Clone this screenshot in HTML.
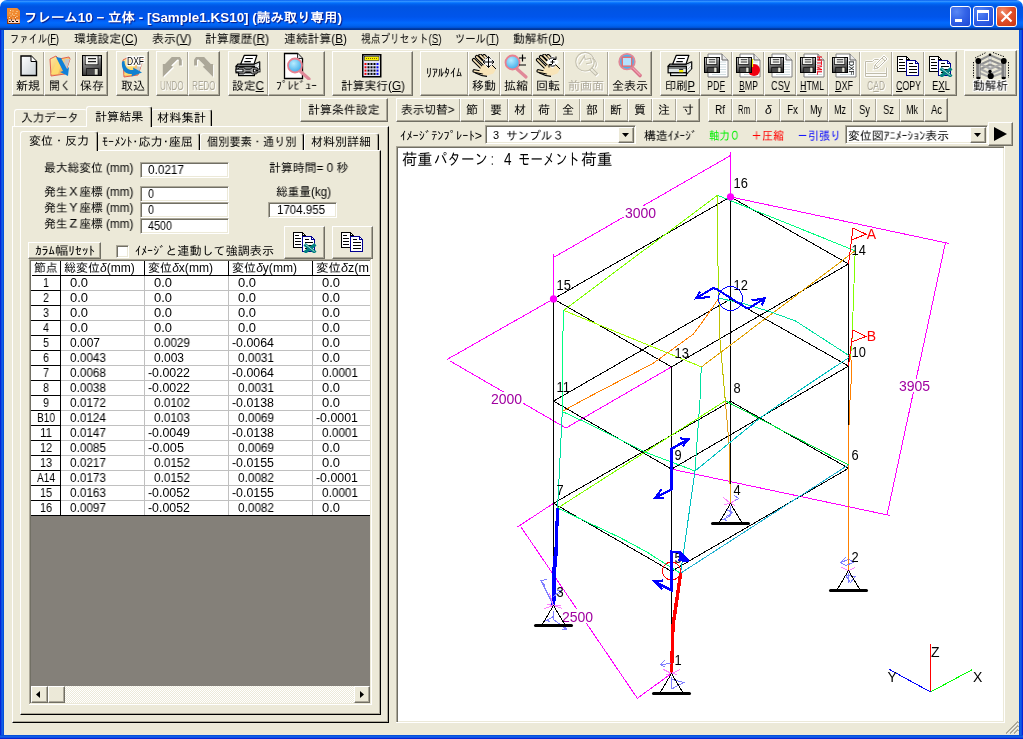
<!DOCTYPE html>
<html lang="ja"><head><meta charset="utf-8"><title>フレーム10 − 立体</title><style>
html,body{margin:0;padding:0}
body{width:1023px;height:739px;overflow:hidden;background:#ece9d8;position:relative;font-family:'Liberation Sans','IPAGothic',sans-serif;font-size:12px;color:#000}
div,span.t,svg{position:absolute}
svg{will-change:transform}
span.t{white-space:nowrap;transform-origin:0 50%;will-change:transform}
.rb{background:#ece9d8;box-sizing:border-box;border:1px solid;border-color:#fff #716f64 #716f64 #fff;box-shadow:inset -1px -1px 0 #aca899}
.sk{background:#fff;box-sizing:border-box;border:1px solid;border-color:#aca899 #fff #fff #aca899;box-shadow:inset 1px 1px 0 #716f64,inset -1px -1px 0 #ece9d8}
u{text-decoration:underline;text-underline-offset:1px}
</style></head><body>
<div style="left:0px;top:0px;width:8px;height:8px;background:#fff"></div>
<div style="left:1015px;top:0px;width:8px;height:8px;background:#fff"></div>
<div style="left:0px;top:0px;width:1023px;height:30px;background:linear-gradient(to bottom,#0058ee 0%,#3593ff 4%,#288eff 6%,#127dff 8%,#036ffc 10%,#0262ee 14%,#0057e5 20%,#0054e3 24%,#0055eb 56%,#005bf5 66%,#026afe 76%,#0062ef 86%,#0052d6 92%,#0040ab 94%,#003092 100%);border-radius:7px 7px 0 0"></div>
<div style="left:0px;top:30px;width:4px;height:709px;background:linear-gradient(to right,#0019cf 0,#0831d9 25%,#166aee 50%,#0855dd 75%,#0048d8 100%)"></div>
<div style="left:1019px;top:30px;width:4px;height:709px;background:linear-gradient(to right,#0048d8 0,#0855dd 25%,#166aee 50%,#0831d9 75%,#0019cf 100%)"></div>
<div style="left:0px;top:735px;width:1023px;height:4px;background:linear-gradient(to bottom,#0048d8 0,#0855dd 25%,#166aee 50%,#0831d9 75%,#0019cf 100%)"></div>
<svg style="left:7px;top:8px" width="13" height="16" viewBox="0 0 13 16"><path d="M0 0h10l3 3v13H0z" fill="#e87a22"/><path d="M0 0h10l3 3v5H0z" fill="#f08a30"/><path d="M3 2.500h1M5.500 3h1M9.500 3.500h1M2.500 5h1M5 6h1M8.500 5.500h1M3.500 8h1M6.500 7.500h1M9.500 8.500h1M2 9.500h1M5.500 10h1M8 9.500h1" stroke="#ffe6c0" stroke-width="1"/><rect x="1.500" y="11.500" width="11" height="3.500" fill="#ffd8c4"/><path d="M2 13.500h1.500M5 13.500h2M9 13.500h2M4 12h1M8 12h1" stroke="#000" stroke-width="1"/><path d="M0 15.500h13M0.500 11v5" stroke="#8a3a10" stroke-width="1"/></svg>
<span class="t" style="left:24.00px;top:10.50px;font-size:13px;line-height:13px;font-weight:bold;color:#fff;text-shadow:1px 1px 1px #0a1883;transform:scaleX(1.0346);">フレーム10 − 立体 - [Sample1.KS10] (読み取り専用)</span>
<div style="left:950px;top:6px;width:21px;height:21px;box-sizing:border-box;border:1px solid #fff;border-radius:3px;background:radial-gradient(circle at 30% 25%,#5a88f4 0,#3464e8 45%,#1c48d4 100%)"><div style="left:4px;top:12px;width:7px;height:3px;background:#fff"></div></div>
<div style="left:973px;top:6px;width:21px;height:21px;box-sizing:border-box;border:1px solid #fff;border-radius:3px;background:radial-gradient(circle at 30% 25%,#5a88f4 0,#3464e8 45%,#1c48d4 100%)"><div style="left:3px;top:3px;width:12px;height:11px;box-sizing:border-box;border:1px solid #fff;border-top:3px solid #fff"></div></div>
<div style="left:996px;top:6px;width:21px;height:21px;box-sizing:border-box;border:1px solid #fff;border-radius:3px;background:radial-gradient(circle at 30% 25%,#f09070 0,#e2502a 45%,#c83412 100%)"><svg style="left:3px;top:3px" width="13" height="13" viewBox="0 0 13 13"><path d="M1.5 1.5L11.5 11.5M11.5 1.5L1.5 11.5" stroke="#fff" stroke-width="2.2"/></svg></div>
<span class="t" style="left:10.00px;top:33.00px;font-size:12px;line-height:12px;transform:scaleX(0.7736);">ファイル(<u>F</u>)</span>
<span class="t" style="left:74.00px;top:33.00px;font-size:12px;line-height:12px;transform:scaleX(0.9819);">環境設定(<u>C</u>)</span>
<span class="t" style="left:151.50px;top:33.00px;font-size:12px;line-height:12px;transform:scaleX(0.9871);">表示(<u>V</u>)</span>
<span class="t" style="left:205.00px;top:33.00px;font-size:12px;line-height:12px;transform:scaleX(0.9896);">計算履歴(<u>R</u>)</span>
<span class="t" style="left:283.50px;top:33.00px;font-size:12px;line-height:12px;transform:scaleX(0.9841);">連続計算(<u>B</u>)</span>
<span class="t" style="left:361.00px;top:33.00px;font-size:12px;line-height:12px;transform:scaleX(0.8049);">視点プリセット(<u>S</u>)</span>
<span class="t" style="left:455.00px;top:33.00px;font-size:12px;line-height:12px;transform:scaleX(0.8570);">ツール(<u>T</u>)</span>
<span class="t" style="left:513.00px;top:33.00px;font-size:12px;line-height:12px;transform:scaleX(0.9778);">動解析(<u>D</u>)</span>
<div style="left:4px;top:49px;width:1015px;height:1px;background:#fff"></div>
<div class="rb" style="left:12px;top:51px;width:33px;height:45px;"></div>
<span class="t" style="left:16.00px;top:79.50px;font-size:12px;line-height:12px;color:#000;">新規</span>
<div class="rb" style="left:44px;top:51px;width:33px;height:45px;"></div>
<span class="t" style="left:49.00px;top:79.50px;font-size:12px;line-height:12px;color:#000;transform:scaleX(0.9167);">開く</span>
<div class="rb" style="left:76px;top:51px;width:32px;height:45px;"></div>
<span class="t" style="left:80.00px;top:79.50px;font-size:12px;line-height:12px;color:#000;">保存</span>
<div class="rb" style="left:116px;top:51px;width:33px;height:45px;"></div>
<span class="t" style="left:120.50px;top:79.50px;font-size:12px;line-height:12px;color:#000;">取込</span>
<div class="rb" style="left:156px;top:51px;width:33px;height:45px;"></div>
<span class="t" style="left:161.25px;top:80.50px;font-size:12px;line-height:12px;color:#fff;transform:scaleX(0.6649);">UNDO</span>
<span class="t" style="left:160.25px;top:79.50px;font-size:12px;line-height:12px;color:#aca899;transform:scaleX(0.6649);">UNDO</span>
<div class="rb" style="left:188px;top:51px;width:32px;height:45px;"></div>
<span class="t" style="left:193.25px;top:80.50px;font-size:12px;line-height:12px;color:#fff;transform:scaleX(0.6778);">REDO</span>
<span class="t" style="left:192.25px;top:79.50px;font-size:12px;line-height:12px;color:#aca899;transform:scaleX(0.6778);">REDO</span>
<div class="rb" style="left:228px;top:51px;width:41px;height:45px;"></div>
<span class="t" style="left:232.00px;top:79.50px;font-size:12px;line-height:12px;color:#000;transform:scaleX(0.9794);">設定<u>C</u></span>
<div class="rb" style="left:268px;top:51px;width:57px;height:45px;"></div>
<span class="t" style="left:276.00px;top:79.50px;font-size:12px;line-height:12px;color:#000;transform:scaleX(0.9762);">ﾌﾟﾚﾋﾞｭｰ</span>
<div class="rb" style="left:332px;top:51px;width:81px;height:45px;"></div>
<span class="t" style="left:340.50px;top:79.50px;font-size:12px;line-height:12px;color:#000;transform:scaleX(0.9794);">計算実行(<u>G</u>)</span>
<div class="rb" style="left:420px;top:51px;width:49px;height:45px;"></div>
<span class="t" style="left:426.00px;top:66.70px;font-size:12px;line-height:12px;color:#000;">ﾘｱﾙﾀｲﾑ</span>
<div class="rb" style="left:468px;top:51px;width:33px;height:45px;"></div>
<span class="t" style="left:472.00px;top:79.50px;font-size:12px;line-height:12px;color:#000;">移動</span>
<div class="rb" style="left:500px;top:51px;width:33px;height:45px;"></div>
<span class="t" style="left:504.00px;top:79.50px;font-size:12px;line-height:12px;color:#000;">拡縮</span>
<div class="rb" style="left:532px;top:51px;width:33px;height:45px;"></div>
<span class="t" style="left:536.00px;top:79.50px;font-size:12px;line-height:12px;color:#000;">回転</span>
<div class="rb" style="left:564px;top:51px;width:45px;height:45px;"></div>
<span class="t" style="left:569.00px;top:80.50px;font-size:12px;line-height:12px;color:#fff;">前画面</span>
<span class="t" style="left:568.00px;top:79.50px;font-size:12px;line-height:12px;color:#aca899;">前画面</span>
<div class="rb" style="left:608px;top:51px;width:44px;height:45px;"></div>
<span class="t" style="left:612.00px;top:79.50px;font-size:12px;line-height:12px;color:#000;">全表示</span>
<div class="rb" style="left:660px;top:51px;width:41px;height:45px;"></div>
<span class="t" style="left:665.00px;top:79.50px;font-size:12px;line-height:12px;color:#000;transform:scaleX(0.9370);">印刷<u>P</u></span>
<div class="rb" style="left:700px;top:51px;width:33px;height:45px;"></div>
<span class="t" style="left:707.00px;top:79.50px;font-size:12px;line-height:12px;color:#000;transform:scaleX(0.7495);">PD<u>F</u></span>
<div class="rb" style="left:732px;top:51px;width:33px;height:45px;"></div>
<span class="t" style="left:738.50px;top:79.50px;font-size:12px;line-height:12px;color:#000;transform:scaleX(0.7303);"><u>B</u>MP</span>
<div class="rb" style="left:764px;top:51px;width:33px;height:45px;"></div>
<span class="t" style="left:770.50px;top:79.50px;font-size:12px;line-height:12px;color:#000;transform:scaleX(0.7696);">CS<u>V</u></span>
<div class="rb" style="left:796px;top:51px;width:33px;height:45px;"></div>
<span class="t" style="left:800.00px;top:79.50px;font-size:12px;line-height:12px;color:#000;transform:scaleX(0.7346);"><u>H</u>TML</span>
<div class="rb" style="left:828px;top:51px;width:33px;height:45px;"></div>
<span class="t" style="left:835.00px;top:79.50px;font-size:12px;line-height:12px;color:#000;transform:scaleX(0.7495);"><u>D</u>XF</span>
<div class="rb" style="left:860px;top:51px;width:33px;height:45px;"></div>
<span class="t" style="left:868.00px;top:80.50px;font-size:12px;line-height:12px;color:#fff;transform:scaleX(0.7098);">C<u>A</u>D</span>
<span class="t" style="left:867.00px;top:79.50px;font-size:12px;line-height:12px;color:#aca899;transform:scaleX(0.7098);">C<u>A</u>D</span>
<div class="rb" style="left:892px;top:51px;width:33px;height:45px;"></div>
<span class="t" style="left:895.50px;top:79.50px;font-size:12px;line-height:12px;color:#000;transform:scaleX(0.7350);"><u>C</u>OPY</span>
<div class="rb" style="left:924px;top:51px;width:33px;height:45px;"></div>
<span class="t" style="left:931.50px;top:79.50px;font-size:12px;line-height:12px;color:#000;transform:scaleX(0.7923);">E<u>X</u>L</span>
<div class="rb" style="left:964px;top:50px;width:53px;height:46px;"></div>
<span class="t" style="left:972.00px;top:79.50px;font-size:12px;line-height:12px;color:#fff;transform:scaleX(0.9722);">動解析</span>
<span class="t" style="left:974.00px;top:79.50px;font-size:12px;line-height:12px;color:#fff;transform:scaleX(0.9722);">動解析</span>
<span class="t" style="left:973.00px;top:78.50px;font-size:12px;line-height:12px;color:#fff;transform:scaleX(0.9722);">動解析</span>
<span class="t" style="left:973.00px;top:80.50px;font-size:12px;line-height:12px;color:#fff;transform:scaleX(0.9722);">動解析</span>
<span class="t" style="left:972.00px;top:78.50px;font-size:12px;line-height:12px;color:#fff;transform:scaleX(0.9722);">動解析</span>
<span class="t" style="left:974.00px;top:80.50px;font-size:12px;line-height:12px;color:#fff;transform:scaleX(0.9722);">動解析</span>
<span class="t" style="left:972.00px;top:80.50px;font-size:12px;line-height:12px;color:#fff;transform:scaleX(0.9722);">動解析</span>
<span class="t" style="left:974.00px;top:78.50px;font-size:12px;line-height:12px;color:#fff;transform:scaleX(0.9722);">動解析</span>
<span class="t" style="left:973.00px;top:79.50px;font-size:12px;line-height:12px;transform:scaleX(0.9722);">動解析</span>
<svg style="left:0px;top:0px" width="1" height="1" viewBox="0 0 1 1" ><defs><linearGradient id="gpg" x1="0" y1="0" x2="1" y2="1"><stop offset="0" stop-color="#fff"/><stop offset="1" stop-color="#c8d0d4"/></linearGradient><linearGradient id="gfl" x1="0" y1="0" x2="0.3" y2="1"><stop offset="0" stop-color="#d0d0d0"/><stop offset="0.5" stop-color="#808080"/><stop offset="1" stop-color="#303030"/></linearGradient><radialGradient id="glens" cx="0.4" cy="0.35" r="0.7"><stop offset="0" stop-color="#b8ecff"/><stop offset="1" stop-color="#38a8e8"/></radialGradient><linearGradient id="gfo" x1="0" y1="0" x2="1" y2="1"><stop offset="0" stop-color="#fff0a0"/><stop offset="1" stop-color="#f0a040"/></linearGradient></defs></svg>
<svg style="left:20px;top:55px" width="18" height="22" viewBox="0 0 18 22" ><path d="M1 1h10l5.5 5.5V20.5H1z" fill="url(#gpg)" stroke="#000" stroke-width="1.4"/><path d="M11 1v5.5h5.5" fill="#fff" stroke="#000" stroke-width="1"/></svg>
<svg style="left:48px;top:55px" width="24" height="22" viewBox="0 0 24 22" ><path d="M2 4l6-3 3 3 10-2 1 2-5 15-14 2z" fill="url(#gfo)" stroke="#e06050" stroke-width="1"/><path d="M3 19L9 6l5 1-4 12z" fill="#ffe070" opacity=".8"/><path d="M17 4l5 0-4 12-3-1z" fill="#c8c8c8"/></svg>
<svg style="left:48px;top:55px" width="24" height="22" viewBox="0 0 24 22" ><path d="M8 2l5 1 6 11 2-2-1 9-8-4 3-1z" fill="#1080d8"/></svg>
<svg style="left:82px;top:55px" width="20" height="21" viewBox="0 0 20 21" ><rect x="0.50" y="0.50" width="19.00" height="20.00" fill="url(#gfl)" stroke="#000" stroke-width="1.2"/><rect x="3.20" y="0.80" width="12.80" height="9.00" fill="#f4f4f0" stroke="#000" stroke-width=".7"/><path d="M6.0 3.6H14.0M6.0 6.6H14.0" stroke="#202020" stroke-width="1.20"/><rect x="17.20" y="1.60" width="1.40" height="1.60" fill="#d8d8d8" /><rect x="4.70" y="13.50" width="11.50" height="6.70" fill="#484848" stroke="#000" stroke-width=".6"/><rect x="12.80" y="14.00" width="2.80" height="5.60" fill="#e4e4d8" /></svg>
<svg style="left:121px;top:56px" width="24" height="22" viewBox="0 0 24 22" ><path d="M2 4l6-3 3 3 10-2 1 2-5 15-14 2z" fill="url(#gfo)" stroke="#e06050" stroke-width="1"/><path d="M3 19L9 6l5 1-4 12z" fill="#ffe070" opacity=".8"/><path d="M17 4l5 0-4 12-3-1z" fill="#c8c8c8"/></svg>
<svg style="left:120px;top:55px" width="26" height="24" viewBox="0 0 26 24" ><path d="M4.500 6C4.500 12 8 15.500 13.500 15L13 12.500L22 17.500L11.500 21.500L12 19C5 20 1 14 2 6.500z" fill="#1080d0"/><text x="7" y="9.5" font-size="10" font-family="Liberation Sans, sans-serif" stroke="#fff" stroke-width="2.5" textLength="17" lengthAdjust="spacingAndGlyphs">DXF</text><text x="7" y="9.5" font-size="10" font-family="Liberation Sans, sans-serif" fill="#000" textLength="17" lengthAdjust="spacingAndGlyphs">DXF</text></svg>
<svg style="left:156px;top:51px" width="64" height="32" viewBox="156 51 64 32"><path d="M163.8 64.9L166.0 64.9L172.8 58.1L180.9 58.1L182.8 60.7L182.8 66.5L179.9 66.5L179.9 60.7L178.3 60.4L172.2 66.5L174.1 67.8L163.8 78.1z" fill="#fff"/><path d="M162.8 63.9L165.0 63.9L171.8 57.1L179.9 57.1L181.8 59.7L181.8 65.5L178.9 65.5L178.9 59.7L177.3 59.4L171.2 65.5L173.1 66.8L162.8 77.1z" fill="#aca899"/><path d="M214.1 64.9L211.9 64.9L205.1 58.1L197.0 58.1L195.1 60.7L195.1 66.5L198.0 66.5L198.0 60.7L199.6 60.4L205.7 66.5L203.8 67.8L214.1 78.1z" fill="#fff"/><path d="M213.1 63.9L210.9 63.9L204.1 57.1L196.0 57.1L194.1 59.7L194.1 65.5L197.0 65.5L197.0 59.7L198.6 59.4L204.7 65.5L202.8 66.8L213.1 77.1z" fill="#aca899"/></svg>
<svg style="left:235px;top:54px" width="26" height="23" viewBox="0 0 26 23" ><path d="M1.100 12.300L2.800 10.200H19L24.700 7.800V14.700L19.400 20.400V12.300z" fill="#f4f6f6" stroke="#000" stroke-width="1.200" stroke-linejoin="round"/><path d="M20.500 12l3.500-3.500M20.500 15.500l3.500-3.500M20.500 19l3.500-4" stroke="#a0a8a8" stroke-width=".800"/><path d="M9.300 1.300H21.900L19 10.200H5.600z" fill="#fff" stroke="#000" stroke-width="1.200" stroke-linejoin="round"/><path d="M10.500 4.500h7.300M9.300 7.600h6.500" stroke="#000" stroke-width="1.200"/><rect x="1.100" y="12.300" width="18.300" height="6.500" fill="#dfe5e5" stroke="#000" stroke-width="1.200"/><path d="M1.100 14h18.300" stroke="#000" stroke-width=".900"/><rect x="3.600" y="18.800" width="15.800" height="2.800" fill="#eef2f2" stroke="#000" stroke-width="1.200"/><path d="M1.500 16.500L4.500 13.300H8.500L10.800 15.300H15.200L17.500 13.300H21.500L24.500 16.500L21.500 19.900H17.500L15.200 17.900H10.800L8.500 19.900H4.500z" fill="#9a9a9a" stroke="#000" stroke-width=".900"/><rect x="1" y="15.200" width="7" height="2.700" fill="#eef2f2" stroke="#000" stroke-width=".900"/><rect x="18.500" y="15.200" width="6.500" height="2.700" fill="#fff" stroke="#000" stroke-width=".900"/><rect x="20.500" y="16" width="3" height="1.200" fill="#000"/></svg>
<svg style="left:667px;top:54px" width="26" height="23" viewBox="0 0 26 23" ><path d="M1.100 12.300L2.800 10.200H19L24.700 7.800V14.700L19.400 20.400V12.300z" fill="#f4f6f6" stroke="#000" stroke-width="1.200" stroke-linejoin="round"/><path d="M20.500 12l3.500-3.500M20.500 15.500l3.500-3.500M20.500 19l3.500-4" stroke="#a0a8a8" stroke-width=".800"/><path d="M9.300 1.300H21.900L19 10.200H5.600z" fill="#fff" stroke="#000" stroke-width="1.200" stroke-linejoin="round"/><path d="M10.500 4.500h7.300M9.300 7.600h6.500" stroke="#000" stroke-width="1.200"/><rect x="1.100" y="12.300" width="18.300" height="6.500" fill="#dfe5e5" stroke="#000" stroke-width="1.200"/><path d="M1.100 14h18.300" stroke="#000" stroke-width=".900"/><rect x="3.600" y="18.800" width="15.800" height="2.800" fill="#eef2f2" stroke="#000" stroke-width="1.200"/><rect x="12.100" y="15.200" width="4.100" height="1" fill="#000"/><rect x="12.100" y="16" width="4.100" height="2.200" fill="#f8f000"/></svg>
<svg style="left:283px;top:52px" width="30" height="28" viewBox="0 0 30 28" ><path d="M1.5 1.5h13l5 5V26.500H1.500z" fill="#fff" stroke="#000" stroke-width="1.3"/><path d="M14.500 1.500v5h5" fill="#e0e0e0" stroke="#000" stroke-width=".8"/><path d="M17 19l9 8" stroke="#e08898" stroke-width="3.2" stroke-linecap="round"/><circle cx="12" cy="13.500" r="7" fill="url(#glens)" stroke="#e88090" stroke-width="1.800"/></svg>
<svg style="left:362px;top:54px" width="20" height="24" viewBox="0 0 20 24" ><rect x="0.750" y="0.750" width="18" height="22" fill="#e0e0f8" stroke="#000" stroke-width="1.500"/><rect x="2.500" y="2.500" width="14.500" height="4" fill="#f8f000" stroke="#000" stroke-width=".5"/><path d="M4 4.500h11.500" stroke="#806000" stroke-width="1" stroke-dasharray="1 1"/><rect x="2.5" y="9.0" width="2" height="2" fill="#f00000"/><rect x="5.5" y="9.0" width="2" height="2" fill="#000"/><rect x="8.5" y="9.0" width="2" height="2" fill="#000"/><rect x="11.5" y="9.0" width="2" height="2" fill="#000"/><rect x="14.5" y="9.0" width="2" height="2" fill="#0000f0"/><rect x="2.5" y="12.3" width="2" height="2" fill="#f00000"/><rect x="5.5" y="12.3" width="2" height="2" fill="#000"/><rect x="8.5" y="12.3" width="2" height="2" fill="#000"/><rect x="11.5" y="12.3" width="2" height="2" fill="#000"/><rect x="14.5" y="12.3" width="2" height="2" fill="#0000f0"/><rect x="2.5" y="15.6" width="2" height="2" fill="#f00000"/><rect x="5.5" y="15.6" width="2" height="2" fill="#000"/><rect x="8.5" y="15.6" width="2" height="2" fill="#000"/><rect x="11.5" y="15.6" width="2" height="2" fill="#000"/><rect x="14.5" y="15.6" width="2" height="2" fill="#0000f0"/><rect x="2.5" y="18.9" width="2" height="2" fill="#f00000"/><rect x="5.5" y="18.9" width="2" height="2" fill="#000"/><rect x="8.5" y="18.9" width="2" height="2" fill="#000"/><rect x="11.5" y="18.9" width="2" height="2" fill="#000"/><rect x="14.5" y="18.9" width="2" height="2" fill="#0000f0"/></svg>
<svg style="left:471px;top:54px" width="27" height="24" viewBox="0 0 27 24" ><path d="M10 13L18 6.500L25 15L22.500 19.500L15 22L6 18.500z" fill="#f8e4b8"/><path d="M2.800 5.800L10.500 13.500M5.800 2.800L13.500 10.500M9.200 1.400L16.500 8.500M13.100 1.900L18.500 7.500M3.300 17L11 18.500" stroke="#000" stroke-width="3.800" stroke-linecap="round" fill="none"/><path d="M4 18.800C8 21 12 22 16 22.300" stroke="#000" stroke-width="1.200" fill="none"/><path d="M10 13L18 7L24 15L22 19L15 21L8 18z" fill="#f8e4b8"/><path d="M2.800 5.800L10.500 13.500M5.800 2.800L13.500 10.500M9.200 1.400L16.500 8.500M13.100 1.900L18.500 7.500M3.300 17L11 18.500" stroke="#f8e4b8" stroke-width="1.700" stroke-linecap="round" fill="none"/><path d="M17.500 1.500l6.500 6.500-6.500 6.500-6.500-6.500z" fill="#fff"/><path d="M17.500 2.500v11M12 8h11M17.500 2.500l-2 2.200M17.500 2.500l2 2.200M17.500 13.500l-2-2.200M17.500 13.500l2-2.200M12 8l2.200-2M12 8l2.200 2M23 8l-2.200-2M23 8l-2.200 2" stroke="#000" stroke-width="1" fill="none"/><path d="M21 11l4 4" stroke="#000" stroke-width="1"/></svg>
<svg style="left:535px;top:54px" width="27" height="24" viewBox="0 0 27 24" ><path d="M10 13L18 6.500L25 15L22.500 19.500L15 22L6 18.500z" fill="#f8e4b8"/><path d="M2.800 5.800L10.500 13.500M5.800 2.800L13.500 10.500M9.200 1.400L16.500 8.500M13.100 1.900L18.500 7.500M3.300 17L11 18.500" stroke="#000" stroke-width="3.800" stroke-linecap="round" fill="none"/><path d="M4 18.800C8 21 12 22 16 22.300" stroke="#000" stroke-width="1.200" fill="none"/><path d="M10 13L18 7L24 15L22 19L15 21L8 18z" fill="#f8e4b8"/><path d="M2.800 5.800L10.500 13.500M5.800 2.800L13.500 10.500M9.200 1.400L16.500 8.500M13.100 1.900L18.500 7.500M3.300 17L11 18.500" stroke="#f8e4b8" stroke-width="1.700" stroke-linecap="round" fill="none"/><path d="M17.500 1.500l6.500 6.500-6.500 6.500-6.500-6.500z" fill="#fff"/><path d="M14 5.500a4.500 4.500 0 0 1 7 0M21 10.500a4.500 4.500 0 0 1-7 0M21 5.500v-3M21 5.500h-3M14 10.500v3M14 10.500h3M17.500 6v4M15.500 8h4" stroke="#000" stroke-width="1" fill="none"/><path d="M21 11l4 4" stroke="#000" stroke-width="1"/></svg>
<svg style="left:502px;top:52px" width="28" height="28" viewBox="0 0 28 28" ><path d="M15 17l9 8" stroke="#e08898" stroke-width="3.200" stroke-linecap="round"/><circle cx="10.500" cy="10.500" r="7" fill="url(#glens)" stroke="#e88090" stroke-width="1.800"/><path d="M17 6h7M20.500 2.500v7M17 13h7" stroke="#000" stroke-width="1.200"/></svg>
<svg style="left:573px;top:51px" width="28" height="28" viewBox="0 0 28 28" ><g transform="translate(1,1)"><circle cx="12" cy="10.700" r="9.300" fill="none" stroke="#fff" stroke-width="1.100"/><path d="M16.500 18.500L22.500 24.500L24.500 22.500L18.500 16.500" fill="none" stroke="#fff" stroke-width="1.100"/><path d="M5.500 12L12.500 5V8.500H18V13H12.500" fill="none" stroke="#fff" stroke-width="1.100" transform="rotate(-12 12 10)"/><path d="M19 7.500a5.500 5.500 0 0 1 3 9" fill="none" stroke="#fff" stroke-width="1.100"/></g><circle cx="12" cy="10.700" r="9.300" fill="none" stroke="#c4c0ae" stroke-width="1.100"/><path d="M16.500 18.500L22.500 24.500L24.500 22.500L18.500 16.500" fill="none" stroke="#c4c0ae" stroke-width="1.100"/><path d="M5.500 12L12.500 5V8.500H18V13H12.500" fill="none" stroke="#c4c0ae" stroke-width="1.100" transform="rotate(-12 12 10)"/><path d="M19 7.500a5.500 5.500 0 0 1 3 9" fill="none" stroke="#c4c0ae" stroke-width="1.100"/></svg>
<svg style="left:617px;top:52px" width="28" height="28" viewBox="0 0 28 28" ><path d="M15.500 16l7.500 7.500" stroke="#d87088" stroke-width="3.600" stroke-linecap="round"/><path d="M15.500 15.500l7.500 7.500" stroke="#f0a0b0" stroke-width="1.400" stroke-linecap="round"/><circle cx="10" cy="9.700" r="7.800" fill="#48b4f0" stroke="#e08898" stroke-width="1.700"/><rect x="5.300" y="5.300" width="9.400" height="8.800" fill="#b4e2ff" stroke="#f06868" stroke-width="1.300"/></svg>
<svg style="left:707px;top:53px" width="22" height="25" viewBox="0 0 22 25" ><path d="M1 1h14l6 6V24H1z" fill="#fff" stroke="#808080" stroke-width="1"/><path d="M15 1v6h6" fill="#e8e8e8" stroke="#606060" stroke-width="1"/><path d="M12 9h7M12 11.500h7M12 14h7M12 16.500h7M5 19h14M5 21.500h14" stroke="#d0dce0" stroke-width="1"/></svg>
<svg style="left:704px;top:57px" width="16" height="16" viewBox="0 0 16 16" ><rect x="0.40" y="0.38" width="15.20" height="15.24" fill="url(#gfl)" stroke="#000" stroke-width="1.2"/><rect x="2.56" y="0.61" width="10.24" height="6.86" fill="#f4f4f0" stroke="#000" stroke-width=".7"/><path d="M4.8 2.7H11.2M4.8 5.0H11.2" stroke="#202020" stroke-width="0.91"/><rect x="13.76" y="1.22" width="1.12" height="1.22" fill="#d8d8d8" /><rect x="3.76" y="10.29" width="9.20" height="5.10" fill="#484848" stroke="#000" stroke-width=".6"/><rect x="10.24" y="10.67" width="2.24" height="4.27" fill="#e4e4d8" /></svg>
<svg style="left:739px;top:53px" width="22" height="25" viewBox="0 0 22 25" ><path d="M1 1h14l6 6V24H1z" fill="#fff" stroke="#808080" stroke-width="1"/><path d="M15 1v6h6" fill="#e8e8e8" stroke="#606060" stroke-width="1"/><path d="M12 9h7M12 11.500h7M12 14h7M12 16.500h7M5 19h14M5 21.500h14" stroke="#d0dce0" stroke-width="1"/><circle cx="15" cy="17" r="6" fill="#f00010"/><path d="M13.500 6v8" stroke="#f0f000" stroke-width="1.200"/></svg>
<svg style="left:736px;top:57px" width="16" height="16" viewBox="0 0 16 16" ><rect x="0.40" y="0.38" width="15.20" height="15.24" fill="url(#gfl)" stroke="#000" stroke-width="1.2"/><rect x="2.56" y="0.61" width="10.24" height="6.86" fill="#f4f4f0" stroke="#000" stroke-width=".7"/><path d="M4.8 2.7H11.2M4.8 5.0H11.2" stroke="#202020" stroke-width="0.91"/><rect x="13.76" y="1.22" width="1.12" height="1.22" fill="#d8d8d8" /><rect x="3.76" y="10.29" width="9.20" height="5.10" fill="#484848" stroke="#000" stroke-width=".6"/><rect x="10.24" y="10.67" width="2.24" height="4.27" fill="#e4e4d8" /></svg>
<svg style="left:771px;top:53px" width="22" height="25" viewBox="0 0 22 25" ><path d="M1 1h14l6 6V24H1z" fill="#fff" stroke="#808080" stroke-width="1"/><path d="M15 1v6h6" fill="#e8e8e8" stroke="#606060" stroke-width="1"/><path d="M12 9h7M12 11.500h7M12 14h7M12 16.500h7M5 19h14M5 21.500h14" stroke="#d0dce0" stroke-width="1"/></svg>
<svg style="left:768px;top:57px" width="16" height="16" viewBox="0 0 16 16" ><rect x="0.40" y="0.38" width="15.20" height="15.24" fill="url(#gfl)" stroke="#000" stroke-width="1.2"/><rect x="2.56" y="0.61" width="10.24" height="6.86" fill="#f4f4f0" stroke="#000" stroke-width=".7"/><path d="M4.8 2.7H11.2M4.8 5.0H11.2" stroke="#202020" stroke-width="0.91"/><rect x="13.76" y="1.22" width="1.12" height="1.22" fill="#d8d8d8" /><rect x="3.76" y="10.29" width="9.20" height="5.10" fill="#484848" stroke="#000" stroke-width=".6"/><rect x="10.24" y="10.67" width="2.24" height="4.27" fill="#e4e4d8" /></svg>
<svg style="left:803px;top:53px" width="22" height="25" viewBox="0 0 22 25" ><path d="M1 1h14l6 6V24H1z" fill="#fff" stroke="#808080" stroke-width="1"/><path d="M15 1v6h6" fill="#e8e8e8" stroke="#606060" stroke-width="1"/><path d="M12 9h7M12 11.500h7M12 14h7M12 16.500h7M5 19h14M5 21.500h14" stroke="#d0dce0" stroke-width="1"/><text transform="translate(14,3) rotate(90)" font-size="8" font-weight="bold" fill="#f00010" font-family="Liberation Sans, sans-serif" textLength="19" lengthAdjust="spacingAndGlyphs">HTML</text></svg>
<svg style="left:800px;top:57px" width="16" height="16" viewBox="0 0 16 16" ><rect x="0.40" y="0.38" width="15.20" height="15.24" fill="url(#gfl)" stroke="#000" stroke-width="1.2"/><rect x="2.56" y="0.61" width="10.24" height="6.86" fill="#f4f4f0" stroke="#000" stroke-width=".7"/><path d="M4.8 2.7H11.2M4.8 5.0H11.2" stroke="#202020" stroke-width="0.91"/><rect x="13.76" y="1.22" width="1.12" height="1.22" fill="#d8d8d8" /><rect x="3.76" y="10.29" width="9.20" height="5.10" fill="#484848" stroke="#000" stroke-width=".6"/><rect x="10.24" y="10.67" width="2.24" height="4.27" fill="#e4e4d8" /></svg>
<svg style="left:835px;top:53px" width="22" height="25" viewBox="0 0 22 25" ><path d="M1 1h14l6 6V24H1z" fill="#fff" stroke="#808080" stroke-width="1"/><path d="M15 1v6h6" fill="#e8e8e8" stroke="#606060" stroke-width="1"/><path d="M12 9h7M12 11.500h7M12 14h7M12 16.500h7M5 19h14M5 21.500h14" stroke="#d0dce0" stroke-width="1"/><text transform="translate(14,8) rotate(90)" font-size="8" fill="#000" font-family="Liberation Sans, sans-serif" textLength="14" lengthAdjust="spacingAndGlyphs">DXF</text></svg>
<svg style="left:832px;top:57px" width="16" height="16" viewBox="0 0 16 16" ><rect x="0.40" y="0.38" width="15.20" height="15.24" fill="url(#gfl)" stroke="#000" stroke-width="1.2"/><rect x="2.56" y="0.61" width="10.24" height="6.86" fill="#f4f4f0" stroke="#000" stroke-width=".7"/><path d="M4.8 2.7H11.2M4.8 5.0H11.2" stroke="#202020" stroke-width="0.91"/><rect x="13.76" y="1.22" width="1.12" height="1.22" fill="#d8d8d8" /><rect x="3.76" y="10.29" width="9.20" height="5.10" fill="#484848" stroke="#000" stroke-width=".6"/><rect x="10.24" y="10.67" width="2.24" height="4.27" fill="#e4e4d8" /></svg>
<svg style="left:863px;top:54px" width="28" height="25" viewBox="0 0 28 25" ><path d="M2.500 7.500h7l2-2h7M2.500 7.500v15h21v-9M2.500 19.500h21" fill="none" stroke="#fff" stroke-width="2.500"/><path d="M2.500 7.500h7l2-2h7M2.500 7.500v15h21v-9M2.500 19.500h21" fill="none" stroke="#c0bcaa" stroke-width="1"/><path d="M11 15l1-4 9-9 3 3-9 9z" fill="#ece9d8" stroke="#fff" stroke-width="2.500"/><path d="M11 15l1-4 9-9 3 3-9 9zM12 11l3 3M19 4l3 3" fill="none" stroke="#c0bcaa" stroke-width="1"/></svg>
<svg style="left:897px;top:56px" width="24" height="21" viewBox="0 0 24 21" shape-rendering="crispEdges"><path d="M0.500 0.500H9.500L12.500 3.500V15.500H0.500z" fill="#fff" stroke="#000" stroke-width="1"/><path d="M9.500 0.500V3.500H12.500" fill="none" stroke="#000" stroke-width="1"/><path d="M2 3.500H6M2 6.500H8M2 9.500H8M2 12.500H8" stroke="#000" stroke-width="1"/><path d="M9.500 4.500H18.500L21.500 7.500V19.500H9.500z" fill="#fff" stroke="#000090" stroke-width="1"/><path d="M18.500 4.500V7.500H21.500" fill="none" stroke="#000090" stroke-width="1"/><path d="M11.500 7.500H15.500M11.500 10.500H19.500M11.500 13.500H19.500M11.500 16.500H19.500" stroke="#000" stroke-width="1"/></svg>
<svg style="left:929px;top:56px" width="24" height="21" viewBox="0 0 24 21" shape-rendering="crispEdges"><path d="M0.500 0.500H9.500L12.500 3.500V15.500H0.500z" fill="#fff" stroke="#000" stroke-width="1"/><path d="M9.500 0.500V3.500H12.500" fill="none" stroke="#000" stroke-width="1"/><path d="M2 3.500H6M2 6.500H8M2 9.500H8M2 12.500H8" stroke="#000" stroke-width="1"/><path d="M9.500 4.500H18.500L21.500 7.500V19.500H9.500z" fill="#fff" stroke="#000090" stroke-width="1"/><path d="M18.500 4.500V7.500H21.500" fill="none" stroke="#000090" stroke-width="1"/><path d="M11.500 7.500H15.500M11.500 10.500H19.500M11.500 13.500H19.500M11.500 16.500H19.500" stroke="#000" stroke-width="1"/><path d="M11.500 12.300L22.500 20.500M22.500 12.300L11.500 20.500" stroke="#008080" stroke-width="3.400" shape-rendering="auto"/><path d="M12.500 12.500L21.500 19.500" stroke="#fff" stroke-width=".700" shape-rendering="auto"/></svg>
<svg style="left:972px;top:51px" width="38" height="29" viewBox="0 0 38 29" ><path d="M3 7L14 1.500M21 1.500L33 6M1.500 11V27M36.500 11V27" fill="none" stroke="#000" stroke-width="1" stroke-dasharray="1.300 1.300"/><path d="M18 4v16" stroke="#b8b8b8" stroke-width="3"/><path d="M18 4v16" stroke="#fff" stroke-width="1"/><path d="M6.400 10L18 4l13.700 6M6.400 14.500L18 9l13.700 5.500M6.400 19l11.600-5.500 13.700 5.500" stroke="#909090" stroke-width="2" fill="none"/><path d="M6.400 12l12 6 13.300-6M6.400 17l12 6 13.300-6M6.400 21.500l12 5 13.300-5" stroke="#a8a8a8" stroke-width="2" fill="none"/><path d="M6.400 10v17M31.700 10v17" stroke="#808080" stroke-width="4.400"/><path d="M7.400 12v14M32.700 12v14" stroke="#b0b0b0" stroke-width="1.200"/><circle cx="6.300" cy="10" r="2.900" fill="#000"/><circle cx="31.800" cy="10" r="2.900" fill="#000"/><circle cx="18.700" cy="25" r="3.100" fill="#000"/><circle cx="18" cy="3.800" r="1.300" fill="#000"/><circle cx="18" cy="20.500" r="1.700" fill="#000"/><ellipse cx="6.400" cy="27" rx="2.200" ry="1.200" fill="#000"/><ellipse cx="31.700" cy="27" rx="2.200" ry="1.200" fill="#000"/></svg>
<div class="rb" style="left:300px;top:98px;width:88px;height:24px;"></div>
<span class="t" style="left:307.75px;top:103.70px;font-size:12px;line-height:12px;transform:scaleX(0.9931);">計算条件設定</span>
<div class="rb" style="left:396px;top:98px;width:65px;height:24px;"></div>
<span class="t" style="left:400.75px;top:103.50px;font-size:12px;line-height:12px;transform:scaleX(0.9725);">表示切替&gt;</span>
<div class="rb" style="left:460px;top:98px;width:25px;height:24px;"></div>
<span class="t" style="left:466.00px;top:103.50px;font-size:12px;line-height:12px;">節</span>
<div class="rb" style="left:484px;top:98px;width:25px;height:24px;"></div>
<span class="t" style="left:490.00px;top:103.50px;font-size:12px;line-height:12px;">要</span>
<div class="rb" style="left:508px;top:98px;width:25px;height:24px;"></div>
<span class="t" style="left:514.00px;top:103.50px;font-size:12px;line-height:12px;">材</span>
<div class="rb" style="left:532px;top:98px;width:25px;height:24px;"></div>
<span class="t" style="left:538.00px;top:103.50px;font-size:12px;line-height:12px;">荷</span>
<div class="rb" style="left:556px;top:98px;width:25px;height:24px;"></div>
<span class="t" style="left:562.00px;top:103.50px;font-size:12px;line-height:12px;">全</span>
<div class="rb" style="left:580px;top:98px;width:25px;height:24px;"></div>
<span class="t" style="left:586.00px;top:103.50px;font-size:12px;line-height:12px;">部</span>
<div class="rb" style="left:604px;top:98px;width:25px;height:24px;"></div>
<span class="t" style="left:610.00px;top:103.50px;font-size:12px;line-height:12px;">断</span>
<div class="rb" style="left:628px;top:98px;width:25px;height:24px;"></div>
<span class="t" style="left:634.00px;top:103.50px;font-size:12px;line-height:12px;">質</span>
<div class="rb" style="left:652px;top:98px;width:25px;height:24px;"></div>
<span class="t" style="left:658.00px;top:103.50px;font-size:12px;line-height:12px;">注</span>
<div class="rb" style="left:676px;top:98px;width:24px;height:24px;"></div>
<span class="t" style="left:682.00px;top:103.50px;font-size:12px;line-height:12px;">寸</span>
<div class="rb" style="left:708px;top:98px;width:25px;height:24px;"></div>
<span class="t" style="left:715.00px;top:103.50px;font-size:12px;line-height:12px;transform:scaleX(0.8333);">Rf</span>
<div class="rb" style="left:732px;top:98px;width:25px;height:24px;"></div>
<span class="t" style="left:738.00px;top:103.50px;font-size:12px;line-height:12px;transform:scaleX(0.6427);">Rm</span>
<div class="rb" style="left:756px;top:98px;width:25px;height:24px;"></div>
<span class="t" style="left:764.66px;top:103.50px;font-size:12px;line-height:12px;font-style:italic;">δ</span>
<div class="rb" style="left:780px;top:98px;width:25px;height:24px;"></div>
<span class="t" style="left:786.50px;top:103.50px;font-size:12px;line-height:12px;transform:scaleX(0.8244);">Fx</span>
<div class="rb" style="left:804px;top:98px;width:25px;height:24px;"></div>
<span class="t" style="left:810.00px;top:103.50px;font-size:12px;line-height:12px;transform:scaleX(0.7500);">My</span>
<div class="rb" style="left:828px;top:98px;width:25px;height:24px;"></div>
<span class="t" style="left:834.00px;top:103.50px;font-size:12px;line-height:12px;transform:scaleX(0.7500);">Mz</span>
<div class="rb" style="left:852px;top:98px;width:25px;height:24px;"></div>
<span class="t" style="left:858.50px;top:103.50px;font-size:12px;line-height:12px;transform:scaleX(0.7848);">Sy</span>
<div class="rb" style="left:876px;top:98px;width:25px;height:24px;"></div>
<span class="t" style="left:882.50px;top:103.50px;font-size:12px;line-height:12px;transform:scaleX(0.7848);">Sz</span>
<div class="rb" style="left:900px;top:98px;width:25px;height:24px;"></div>
<span class="t" style="left:906.00px;top:103.50px;font-size:12px;line-height:12px;transform:scaleX(0.7500);">Mk</span>
<div class="rb" style="left:924px;top:98px;width:24px;height:24px;"></div>
<span class="t" style="left:930.50px;top:103.50px;font-size:12px;line-height:12px;transform:scaleX(0.7848);">Ac</span>
<span class="t" style="left:400.00px;top:129.50px;font-size:12px;line-height:12px;transform:scaleX(1.0378);">ｲﾒｰｼﾞﾃﾝﾌﾟﾚｰﾄ&gt;</span>
<div class="sk" style="left:485px;top:125px;width:151px;height:19px;"></div>
<span class="t" style="left:492.50px;top:130.00px;font-size:11px;line-height:11px;">3</span>
<span class="t" style="left:506.00px;top:129.50px;font-size:12px;line-height:12px;transform:scaleX(0.9667);">サンプル３</span>
<div class="rb" style="left:618px;top:127px;width:16px;height:16px;"></div>
<svg style="left:622px;top:133px" width="7" height="4"><path d="M0 0h7L3.500 4z" fill="#000"/></svg>
<span class="t" style="left:644.00px;top:129.50px;font-size:12px;line-height:12px;transform:scaleX(0.9815);">構造ｲﾒｰｼﾞ</span>
<span class="t" style="left:708.50px;top:129.50px;font-size:12px;line-height:12px;color:#00f000;transform:scaleX(0.8611);">軸力０</span>
<span class="t" style="left:751.00px;top:129.50px;font-size:12px;line-height:12px;color:#ff0000;transform:scaleX(0.9167);">＋圧縮</span>
<span class="t" style="left:797.00px;top:129.50px;font-size:12px;line-height:12px;color:#0000ff;transform:scaleX(0.9167);">－引張り</span>
<div class="sk" style="left:845px;top:125px;width:143px;height:19px;"></div>
<span class="t" style="left:848.00px;top:129.50px;font-size:12px;line-height:12px;transform:scaleX(0.9902);">変位図ｱﾆﾒｰｼｮﾝ表示</span>
<div class="rb" style="left:970px;top:127px;width:16px;height:16px;"></div>
<svg style="left:974px;top:133px" width="7" height="4"><path d="M0 0h7L3.500 4z" fill="#000"/></svg>
<div class="rb" style="left:988px;top:122px;width:25px;height:24px;"></div>
<svg style="left:994px;top:127px" width="13" height="14"><path d="M0 0L13 7L0 14z" fill="#000"/></svg>
<div style="left:12px;top:126px;width:377px;height:597px;box-sizing:border-box;background:#ece9d8;border:1px solid;border-color:#fff #000 #000 #fff;box-shadow:inset -1px -1px 0 #aca899"></div>
<div style="left:14px;top:109px;width:73px;height:17px;box-sizing:border-box;background:#ece9d8;border-top:1px solid #fff;border-left:1px solid #fff;border-radius:3px 3px 0 0"></div>
<span class="t" style="left:21.00px;top:111.50px;font-size:12px;line-height:12px;transform:scaleX(0.9667);">入力データ</span>
<div style="left:151px;top:109px;width:61px;height:17px;box-sizing:border-box;background:#ece9d8;border-top:1px solid #fff;border-left:1px solid #fff;border-right:1px solid #000;box-shadow:inset -1px 0 0 #aca899;border-radius:3px 3px 0 0"></div>
<span class="t" style="left:157.00px;top:111.50px;font-size:12px;line-height:12px;transform:scaleX(1.0208);">材料集計</span>
<div style="left:86px;top:106px;width:66px;height:21px;box-sizing:border-box;background:#ece9d8;border-top:1px solid #fff;border-left:1px solid #fff;border-right:1px solid #000;box-shadow:inset -1px 0 0 #aca899;border-radius:3px 3px 0 0"></div>
<span class="t" style="left:94.50px;top:110.50px;font-size:12px;line-height:12px;transform:scaleX(1.0104);">計算結果</span>
<div style="left:87px;top:126px;width:63px;height:2px;background:#ece9d8"></div>
<div style="left:20px;top:150px;width:361px;height:565px;box-sizing:border-box;background:#ece9d8;border:1px solid;border-color:#fff #000 #000 #fff;box-shadow:inset -1px -1px 0 #aca899"></div>
<div style="left:97px;top:133px;width:103px;height:17px;box-sizing:border-box;background:#ece9d8;border-top:1px solid #fff;border-left:1px solid #fff;border-right:1px solid #000;box-shadow:inset -1px 0 0 #aca899;border-radius:3px 3px 0 0"></div>
<span class="t" style="left:102.00px;top:136.00px;font-size:12px;line-height:12px;transform:scaleX(1.0111);">ﾓｰﾒﾝﾄ･応力･座屈</span>
<div style="left:200px;top:133px;width:104px;height:17px;box-sizing:border-box;background:#ece9d8;border-top:1px solid #fff;border-left:1px solid #fff;border-right:1px solid #000;box-shadow:inset -1px 0 0 #aca899;border-radius:3px 3px 0 0"></div>
<span class="t" style="left:207.00px;top:136.00px;font-size:12px;line-height:12px;transform:scaleX(0.9323);">個別要素・通り別</span>
<div style="left:304px;top:133px;width:75px;height:17px;box-sizing:border-box;background:#ece9d8;border-top:1px solid #fff;border-left:1px solid #fff;border-right:1px solid #000;box-shadow:inset -1px 0 0 #aca899;border-radius:3px 3px 0 0"></div>
<span class="t" style="left:311.00px;top:136.00px;font-size:12px;line-height:12px;">材料別詳細</span>
<div style="left:20px;top:131px;width:78px;height:20px;box-sizing:border-box;background:#ece9d8;border-top:1px solid #fff;border-left:1px solid #fff;border-right:1px solid #000;box-shadow:inset -1px 0 0 #aca899;border-radius:3px 3px 0 0"></div>
<span class="t" style="left:28.50px;top:135.00px;font-size:12px;line-height:12px;">変位・反力</span>
<div style="left:21px;top:150px;width:75px;height:2px;background:#ece9d8"></div>
<span class="t" style="left:44.00px;top:162.00px;font-size:12px;line-height:12px;transform:scaleX(0.9800);">最大総変位 (mm)</span>
<div class="sk" style="left:140px;top:162px;width:89px;height:16px;"></div>
<span class="t" style="left:147.50px;top:163.70px;font-size:12px;line-height:12px;transform:scaleX(0.9808);">0.0217</span>
<span class="t" style="left:268.50px;top:162.00px;font-size:12px;line-height:12px;transform:scaleX(0.9893);">計算時間= 0 秒</span>
<span class="t" style="left:44.00px;top:186.00px;font-size:12px;line-height:12px;transform:scaleX(0.9800);">発生Ｘ座標 (mm)</span>
<div class="sk" style="left:140px;top:186px;width:89px;height:16px;"></div>
<span class="t" style="left:147.50px;top:187.70px;font-size:12px;line-height:12px;transform:scaleX(0.8972);">0</span>
<span class="t" style="left:44.00px;top:201.50px;font-size:12px;line-height:12px;transform:scaleX(0.9800);">発生Ｙ座標 (mm)</span>
<div class="sk" style="left:140px;top:202px;width:89px;height:16px;"></div>
<span class="t" style="left:147.50px;top:203.70px;font-size:12px;line-height:12px;transform:scaleX(0.8972);">0</span>
<span class="t" style="left:44.00px;top:218.00px;font-size:12px;line-height:12px;transform:scaleX(0.9800);">発生Ｚ座標 (mm)</span>
<div class="sk" style="left:140px;top:218px;width:89px;height:16px;"></div>
<span class="t" style="left:147.50px;top:219.70px;font-size:12px;line-height:12px;transform:scaleX(0.8988);">4500</span>
<span class="t" style="left:276.00px;top:185.50px;font-size:12px;line-height:12px;transform:scaleX(0.9705);">総重量(kg)</span>
<div class="sk" style="left:268px;top:202px;width:69px;height:16px;"></div>
<span class="t" style="left:276.50px;top:203.70px;font-size:12px;line-height:12px;transform:scaleX(0.9588);">1704.955</span>
<div class="rb" style="left:284px;top:226px;width:41px;height:33px;"></div>
<div class="rb" style="left:332px;top:226px;width:41px;height:33px;"></div>
<svg style="left:293px;top:232px" width="24" height="21" viewBox="0 0 24 21" shape-rendering="crispEdges"><path d="M0.500 0.500H9.500L12.500 3.500V15.500H0.500z" fill="#fff" stroke="#000" stroke-width="1"/><path d="M9.500 0.500V3.500H12.500" fill="none" stroke="#000" stroke-width="1"/><path d="M2 3.500H6M2 6.500H8M2 9.500H8M2 12.500H8" stroke="#000" stroke-width="1"/><path d="M9.500 4.500H18.500L21.500 7.500V19.500H9.500z" fill="#fff" stroke="#000090" stroke-width="1"/><path d="M18.500 4.500V7.500H21.500" fill="none" stroke="#000090" stroke-width="1"/><path d="M11.500 7.500H15.500M11.500 10.500H19.500M11.500 13.500H19.500M11.500 16.500H19.500" stroke="#000" stroke-width="1"/><path d="M11.500 12.300L22.500 20.500M22.500 12.300L11.500 20.500" stroke="#008080" stroke-width="3.400" shape-rendering="auto"/><path d="M12.500 12.500L21.500 19.500" stroke="#fff" stroke-width=".700" shape-rendering="auto"/></svg>
<svg style="left:341px;top:232px" width="24" height="21" viewBox="0 0 24 21" shape-rendering="crispEdges"><path d="M0.500 0.500H9.500L12.500 3.500V15.500H0.500z" fill="#fff" stroke="#000" stroke-width="1"/><path d="M9.500 0.500V3.500H12.500" fill="none" stroke="#000" stroke-width="1"/><path d="M2 3.500H6M2 6.500H8M2 9.500H8M2 12.500H8" stroke="#000" stroke-width="1"/><path d="M9.500 4.500H18.500L21.500 7.500V19.500H9.500z" fill="#fff" stroke="#000090" stroke-width="1"/><path d="M18.500 4.500V7.500H21.500" fill="none" stroke="#000090" stroke-width="1"/><path d="M11.500 7.500H15.500M11.500 10.500H19.500M11.500 13.500H19.500M11.500 16.500H19.500" stroke="#000" stroke-width="1"/></svg>
<div class="rb" style="left:28px;top:242px;width:73px;height:17px;"></div>
<span class="t" style="left:34.50px;top:244.50px;font-size:12px;line-height:12px;transform:scaleX(1.1111);">ｶﾗﾑ幅ﾘｾｯﾄ</span>
<div class="sk" style="left:116px;top:245px;width:13px;height:13px;"></div>
<span class="t" style="left:134.50px;top:244.50px;font-size:12px;line-height:12px;transform:scaleX(1.0072);">ｲﾒｰｼﾞと連動して強調表示</span>
<div style="left:29px;top:259px;width:343px;height:446px;background:#fff"></div>
<div style="left:29px;top:259px;width:342px;height:445px;background:#aca899"></div>
<div style="left:30px;top:260px;width:341px;height:444px;background:#ece9d8"></div>
<div style="left:30px;top:260px;width:340px;height:443px;background:#716f64"></div>
<div style="left:31px;top:261px;width:339px;height:442px;background:#fff"></div>
<div style="left:31px;top:516px;width:339px;height:170px;background:#848079"></div>
<div style="left:60px;top:261px;width:1px;height:14px;background:#000"></div>
<div style="left:144px;top:261px;width:1px;height:14px;background:#000"></div>
<div style="left:228px;top:261px;width:1px;height:14px;background:#000"></div>
<div style="left:312px;top:261px;width:1px;height:14px;background:#000"></div>
<div style="left:32px;top:275px;width:338px;height:1px;background:#000"></div>
<span class="t" style="left:33.50px;top:262.00px;font-size:12px;line-height:12px;transform:scaleX(0.9792);">節点</span>
<span class="t" style="left:64.00px;top:262.00px;font-size:12px;line-height:12px;">総変位<i>δ</i>(mm)</span>
<span class="t" style="left:148.00px;top:262.00px;font-size:12px;line-height:12px;transform:scaleX(1.0053);">変位<i>δ</i>x(mm)</span>
<span class="t" style="left:232.00px;top:262.00px;font-size:12px;line-height:12px;transform:scaleX(1.0053);">変位<i>δ</i>y(mm)</span>
<span class="t" style="left:316.00px;top:262.00px;font-size:12px;line-height:12px;transform:scaleX(1.0459);">変位<i>δ</i>z(m</span>
<div style="left:31px;top:290px;width:29px;height:1px;background:#000"></div>
<div style="left:61px;top:290px;width:309px;height:1px;background:#c0c0c0"></div>
<span class="t" style="left:43.00px;top:277.00px;font-size:12px;line-height:12px;transform:scaleX(0.8972);">1</span>
<span class="t" style="left:70.00px;top:277.00px;font-size:12px;line-height:12px;transform:scaleX(1.0787);">0.0</span>
<span class="t" style="left:154.00px;top:277.00px;font-size:12px;line-height:12px;transform:scaleX(1.0787);">0.0</span>
<span class="t" style="left:238.00px;top:277.00px;font-size:12px;line-height:12px;transform:scaleX(1.0787);">0.0</span>
<span class="t" style="left:322.00px;top:277.00px;font-size:12px;line-height:12px;transform:scaleX(1.0787);">0.0</span>
<div style="left:31px;top:305px;width:29px;height:1px;background:#000"></div>
<div style="left:61px;top:305px;width:309px;height:1px;background:#c0c0c0"></div>
<span class="t" style="left:43.00px;top:292.00px;font-size:12px;line-height:12px;transform:scaleX(0.8972);">2</span>
<span class="t" style="left:70.00px;top:292.00px;font-size:12px;line-height:12px;transform:scaleX(1.0787);">0.0</span>
<span class="t" style="left:154.00px;top:292.00px;font-size:12px;line-height:12px;transform:scaleX(1.0787);">0.0</span>
<span class="t" style="left:238.00px;top:292.00px;font-size:12px;line-height:12px;transform:scaleX(1.0787);">0.0</span>
<span class="t" style="left:322.00px;top:292.00px;font-size:12px;line-height:12px;transform:scaleX(1.0787);">0.0</span>
<div style="left:31px;top:320px;width:29px;height:1px;background:#000"></div>
<div style="left:61px;top:320px;width:309px;height:1px;background:#c0c0c0"></div>
<span class="t" style="left:43.00px;top:307.00px;font-size:12px;line-height:12px;transform:scaleX(0.8972);">3</span>
<span class="t" style="left:70.00px;top:307.00px;font-size:12px;line-height:12px;transform:scaleX(1.0787);">0.0</span>
<span class="t" style="left:154.00px;top:307.00px;font-size:12px;line-height:12px;transform:scaleX(1.0787);">0.0</span>
<span class="t" style="left:238.00px;top:307.00px;font-size:12px;line-height:12px;transform:scaleX(1.0787);">0.0</span>
<span class="t" style="left:322.00px;top:307.00px;font-size:12px;line-height:12px;transform:scaleX(1.0787);">0.0</span>
<div style="left:31px;top:335px;width:29px;height:1px;background:#000"></div>
<div style="left:61px;top:335px;width:309px;height:1px;background:#c0c0c0"></div>
<span class="t" style="left:43.00px;top:322.00px;font-size:12px;line-height:12px;transform:scaleX(0.8972);">4</span>
<span class="t" style="left:70.00px;top:322.00px;font-size:12px;line-height:12px;transform:scaleX(1.0787);">0.0</span>
<span class="t" style="left:154.00px;top:322.00px;font-size:12px;line-height:12px;transform:scaleX(1.0787);">0.0</span>
<span class="t" style="left:238.00px;top:322.00px;font-size:12px;line-height:12px;transform:scaleX(1.0787);">0.0</span>
<span class="t" style="left:322.00px;top:322.00px;font-size:12px;line-height:12px;transform:scaleX(1.0787);">0.0</span>
<div style="left:31px;top:350px;width:29px;height:1px;background:#000"></div>
<div style="left:61px;top:350px;width:309px;height:1px;background:#c0c0c0"></div>
<span class="t" style="left:43.00px;top:337.00px;font-size:12px;line-height:12px;transform:scaleX(0.8972);">5</span>
<span class="t" style="left:70.00px;top:337.00px;font-size:12px;line-height:12px;">0.007</span>
<span class="t" style="left:154.00px;top:337.00px;font-size:12px;line-height:12px;transform:scaleX(0.9808);">0.0029</span>
<span class="t" style="left:232.00px;top:337.00px;font-size:12px;line-height:12px;transform:scaleX(1.0319);">-0.0064</span>
<span class="t" style="left:322.00px;top:337.00px;font-size:12px;line-height:12px;transform:scaleX(1.0787);">0.0</span>
<div style="left:31px;top:365px;width:29px;height:1px;background:#000"></div>
<div style="left:61px;top:365px;width:309px;height:1px;background:#c0c0c0"></div>
<span class="t" style="left:43.00px;top:352.00px;font-size:12px;line-height:12px;transform:scaleX(0.8972);">6</span>
<span class="t" style="left:70.00px;top:352.00px;font-size:12px;line-height:12px;transform:scaleX(0.9808);">0.0043</span>
<span class="t" style="left:154.00px;top:352.00px;font-size:12px;line-height:12px;">0.003</span>
<span class="t" style="left:238.00px;top:352.00px;font-size:12px;line-height:12px;transform:scaleX(0.9808);">0.0031</span>
<span class="t" style="left:322.00px;top:352.00px;font-size:12px;line-height:12px;transform:scaleX(1.0787);">0.0</span>
<div style="left:31px;top:380px;width:29px;height:1px;background:#000"></div>
<div style="left:61px;top:380px;width:309px;height:1px;background:#c0c0c0"></div>
<span class="t" style="left:43.00px;top:367.00px;font-size:12px;line-height:12px;transform:scaleX(0.8972);">7</span>
<span class="t" style="left:70.00px;top:367.00px;font-size:12px;line-height:12px;transform:scaleX(0.9808);">0.0068</span>
<span class="t" style="left:148.00px;top:367.00px;font-size:12px;line-height:12px;transform:scaleX(1.0319);">-0.0022</span>
<span class="t" style="left:232.00px;top:367.00px;font-size:12px;line-height:12px;transform:scaleX(1.0319);">-0.0064</span>
<span class="t" style="left:322.00px;top:367.00px;font-size:12px;line-height:12px;transform:scaleX(0.9808);">0.0001</span>
<div style="left:31px;top:395px;width:29px;height:1px;background:#000"></div>
<div style="left:61px;top:395px;width:309px;height:1px;background:#c0c0c0"></div>
<span class="t" style="left:43.00px;top:382.00px;font-size:12px;line-height:12px;transform:scaleX(0.8972);">8</span>
<span class="t" style="left:70.00px;top:382.00px;font-size:12px;line-height:12px;transform:scaleX(0.9808);">0.0038</span>
<span class="t" style="left:148.00px;top:382.00px;font-size:12px;line-height:12px;transform:scaleX(1.0319);">-0.0022</span>
<span class="t" style="left:238.00px;top:382.00px;font-size:12px;line-height:12px;transform:scaleX(0.9808);">0.0031</span>
<span class="t" style="left:322.00px;top:382.00px;font-size:12px;line-height:12px;transform:scaleX(1.0787);">0.0</span>
<div style="left:31px;top:410px;width:29px;height:1px;background:#000"></div>
<div style="left:61px;top:410px;width:309px;height:1px;background:#c0c0c0"></div>
<span class="t" style="left:43.00px;top:397.00px;font-size:12px;line-height:12px;transform:scaleX(0.8972);">9</span>
<span class="t" style="left:70.00px;top:397.00px;font-size:12px;line-height:12px;transform:scaleX(0.9808);">0.0172</span>
<span class="t" style="left:154.00px;top:397.00px;font-size:12px;line-height:12px;transform:scaleX(0.9808);">0.0102</span>
<span class="t" style="left:232.00px;top:397.00px;font-size:12px;line-height:12px;transform:scaleX(1.0319);">-0.0138</span>
<span class="t" style="left:322.00px;top:397.00px;font-size:12px;line-height:12px;transform:scaleX(1.0787);">0.0</span>
<div style="left:31px;top:425px;width:29px;height:1px;background:#000"></div>
<div style="left:61px;top:425px;width:309px;height:1px;background:#c0c0c0"></div>
<span class="t" style="left:37.00px;top:412.00px;font-size:12px;line-height:12px;transform:scaleX(0.8427);">B10</span>
<span class="t" style="left:70.00px;top:412.00px;font-size:12px;line-height:12px;transform:scaleX(0.9808);">0.0124</span>
<span class="t" style="left:154.00px;top:412.00px;font-size:12px;line-height:12px;transform:scaleX(0.9808);">0.0103</span>
<span class="t" style="left:238.00px;top:412.00px;font-size:12px;line-height:12px;transform:scaleX(0.9808);">0.0069</span>
<span class="t" style="left:316.00px;top:412.00px;font-size:12px;line-height:12px;transform:scaleX(1.0319);">-0.0001</span>
<div style="left:31px;top:440px;width:29px;height:1px;background:#000"></div>
<div style="left:61px;top:440px;width:309px;height:1px;background:#c0c0c0"></div>
<span class="t" style="left:40.00px;top:427.00px;font-size:12px;line-height:12px;transform:scaleX(0.9624);">11</span>
<span class="t" style="left:70.00px;top:427.00px;font-size:12px;line-height:12px;transform:scaleX(0.9808);">0.0147</span>
<span class="t" style="left:148.00px;top:427.00px;font-size:12px;line-height:12px;transform:scaleX(1.0319);">-0.0049</span>
<span class="t" style="left:232.00px;top:427.00px;font-size:12px;line-height:12px;transform:scaleX(1.0319);">-0.0138</span>
<span class="t" style="left:322.00px;top:427.00px;font-size:12px;line-height:12px;transform:scaleX(0.9808);">0.0001</span>
<div style="left:31px;top:455px;width:29px;height:1px;background:#000"></div>
<div style="left:61px;top:455px;width:309px;height:1px;background:#c0c0c0"></div>
<span class="t" style="left:40.00px;top:442.00px;font-size:12px;line-height:12px;transform:scaleX(0.8982);">12</span>
<span class="t" style="left:70.00px;top:442.00px;font-size:12px;line-height:12px;transform:scaleX(0.9808);">0.0085</span>
<span class="t" style="left:148.00px;top:442.00px;font-size:12px;line-height:12px;transform:scaleX(1.0579);">-0.005</span>
<span class="t" style="left:238.00px;top:442.00px;font-size:12px;line-height:12px;transform:scaleX(0.9808);">0.0069</span>
<span class="t" style="left:322.00px;top:442.00px;font-size:12px;line-height:12px;transform:scaleX(1.0787);">0.0</span>
<div style="left:31px;top:470px;width:29px;height:1px;background:#000"></div>
<div style="left:61px;top:470px;width:309px;height:1px;background:#c0c0c0"></div>
<span class="t" style="left:40.00px;top:457.00px;font-size:12px;line-height:12px;transform:scaleX(0.8982);">13</span>
<span class="t" style="left:70.00px;top:457.00px;font-size:12px;line-height:12px;transform:scaleX(0.9808);">0.0217</span>
<span class="t" style="left:154.00px;top:457.00px;font-size:12px;line-height:12px;transform:scaleX(0.9808);">0.0152</span>
<span class="t" style="left:232.00px;top:457.00px;font-size:12px;line-height:12px;transform:scaleX(1.0319);">-0.0155</span>
<span class="t" style="left:322.00px;top:457.00px;font-size:12px;line-height:12px;transform:scaleX(1.0787);">0.0</span>
<div style="left:31px;top:485px;width:29px;height:1px;background:#000"></div>
<div style="left:61px;top:485px;width:309px;height:1px;background:#c0c0c0"></div>
<span class="t" style="left:37.00px;top:472.00px;font-size:12px;line-height:12px;transform:scaleX(0.8427);">A14</span>
<span class="t" style="left:70.00px;top:472.00px;font-size:12px;line-height:12px;transform:scaleX(0.9808);">0.0173</span>
<span class="t" style="left:154.00px;top:472.00px;font-size:12px;line-height:12px;transform:scaleX(0.9808);">0.0152</span>
<span class="t" style="left:238.00px;top:472.00px;font-size:12px;line-height:12px;transform:scaleX(0.9808);">0.0082</span>
<span class="t" style="left:316.00px;top:472.00px;font-size:12px;line-height:12px;transform:scaleX(1.0319);">-0.0001</span>
<div style="left:31px;top:500px;width:29px;height:1px;background:#000"></div>
<div style="left:61px;top:500px;width:309px;height:1px;background:#c0c0c0"></div>
<span class="t" style="left:40.00px;top:487.00px;font-size:12px;line-height:12px;transform:scaleX(0.8982);">15</span>
<span class="t" style="left:70.00px;top:487.00px;font-size:12px;line-height:12px;transform:scaleX(0.9808);">0.0163</span>
<span class="t" style="left:148.00px;top:487.00px;font-size:12px;line-height:12px;transform:scaleX(1.0319);">-0.0052</span>
<span class="t" style="left:232.00px;top:487.00px;font-size:12px;line-height:12px;transform:scaleX(1.0319);">-0.0155</span>
<span class="t" style="left:322.00px;top:487.00px;font-size:12px;line-height:12px;transform:scaleX(0.9808);">0.0001</span>
<div style="left:31px;top:515px;width:29px;height:1px;background:#000"></div>
<div style="left:61px;top:515px;width:309px;height:1px;background:#c0c0c0"></div>
<span class="t" style="left:40.00px;top:502.00px;font-size:12px;line-height:12px;transform:scaleX(0.8982);">16</span>
<span class="t" style="left:70.00px;top:502.00px;font-size:12px;line-height:12px;transform:scaleX(0.9808);">0.0097</span>
<span class="t" style="left:148.00px;top:502.00px;font-size:12px;line-height:12px;transform:scaleX(1.0319);">-0.0052</span>
<span class="t" style="left:238.00px;top:502.00px;font-size:12px;line-height:12px;transform:scaleX(0.9808);">0.0082</span>
<span class="t" style="left:322.00px;top:502.00px;font-size:12px;line-height:12px;transform:scaleX(1.0787);">0.0</span>
<div style="left:60px;top:276px;width:1px;height:240px;background:#000"></div>
<div style="left:144px;top:276px;width:1px;height:240px;background:#c0c0c0"></div>
<div style="left:228px;top:276px;width:1px;height:240px;background:#c0c0c0"></div>
<div style="left:312px;top:276px;width:1px;height:240px;background:#c0c0c0"></div>
<div style="left:32px;top:515px;width:338px;height:1px;background:#000"></div>
<div style="left:31px;top:686px;width:339px;height:17px;background:#f4f3ee;background-image:repeating-conic-gradient(#fff 0 25%,#ece9d8 0 50%);background-size:2px 2px"></div>
<div class="rb" style="left:31px;top:686px;width:17px;height:17px;"></div>
<svg style="left:36px;top:691px" width="4" height="7"><path d="M4 0v7L0 3.5z" fill="#000"/></svg>
<div class="rb" style="left:48px;top:686px;width:17px;height:17px;"></div>
<div class="rb" style="left:354px;top:686px;width:16px;height:17px;"></div>
<svg style="left:360px;top:691px" width="4" height="7"><path d="M0 0v7L4 3.5z" fill="#000"/></svg>
<div style="left:396px;top:146px;width:609px;height:577px;background:#fff"></div>
<div style="left:396px;top:146px;width:608px;height:576px;background:#aca899"></div>
<div style="left:397px;top:147px;width:607px;height:575px;background:#716f64"></div>
<div style="left:398px;top:148px;width:606px;height:574px;background:#ece9d8"></div>
<div style="left:398px;top:148px;width:605px;height:573px;background:#fff"></div>
<svg style="left:1005px;top:721px" width="14" height="14" viewBox="0 0 14 14" shape-rendering="crispEdges"><path d="M13 1L1 13M13 5L5 13M13 9L9 13" stroke="#aca899" stroke-width="1.6"/><path d="M13 2L2 13M13 6L6 13M13 10L10 13" stroke="#fff" stroke-width="0.8"/></svg>
<span class="t" style="left:402px;top:151.50px;font-size:16px;line-height:16px;"><span style="position:absolute;left:0.00px;top:0;transform-origin:0 50%;transform:scaleX(0.9531)">荷重</span><span style="position:absolute;left:31.50px;top:0;transform-origin:0 50%;transform:scaleX(0.8438)">パターン</span><span style="position:absolute;left:88.50px;top:0;transform-origin:0 50%;transform:scaleX(0.5614)">:</span><span style="position:absolute;left:102.00px;top:0;transform-origin:0 50%;transform:scaleX(0.8421)">4</span><span style="position:absolute;left:116.00px;top:0;transform-origin:0 50%;transform:scaleX(0.7750)">モーメント</span><span style="position:absolute;left:178.50px;top:0;transform-origin:0 50%;transform:scaleX(0.9844)">荷重</span></span>
<svg style="left:398px;top:148px" width="605" height="573" viewBox="398 148 605 573" font-family="Liberation Sans, sans-serif" shape-rendering="crispEdges"><path d="M553.5 299.0 L553.5 254.0" stroke="#ff00ff" stroke-width="1" fill="none" /><path d="M730.5 197.0 L730.5 152.0" stroke="#ff00ff" stroke-width="1" fill="none" /><path d="M553.5 257.5 L730.5 155.5" stroke="#ff00ff" stroke-width="1" fill="none" /><path d="M730.5 196.9 L949.0 243.5" stroke="#ff00ff" stroke-width="1" fill="none" /><path d="M671.5 469.1 L890.0 515.5" stroke="#ff00ff" stroke-width="1" fill="none" /><path d="M945.5 242.5 L887.0 515.0" stroke="#ff00ff" stroke-width="1" fill="none" /><path d="M553.5 298.9 L447.0 359.5" stroke="#ff00ff" stroke-width="1" fill="none" /><path d="M671.5 366.9 L566.0 428.0" stroke="#ff00ff" stroke-width="1" fill="none" /><path d="M450.0 361.0 L566.0 428.0" stroke="#ff00ff" stroke-width="1" fill="none" /><path d="M553.5 503.3 L517.5 527.0" stroke="#ff00ff" stroke-width="1" fill="none" /><path d="M671.5 673.5 L637.0 698.5" stroke="#ff00ff" stroke-width="1" fill="none" /><path d="M521.0 527.0 L637.5 698.5" stroke="#ff00ff" stroke-width="1" fill="none" /><rect x="624" y="206" width="33" height="13" fill="#fff"/><text x="625.0" y="218.0" fill="#a000a0" font-size="14" text-anchor="start">3000</text><rect x="898" y="379" width="33" height="13" fill="#fff"/><text x="899.0" y="391.0" fill="#a000a0" font-size="14" text-anchor="start">3905</text><rect x="490" y="392" width="33" height="13" fill="#fff"/><text x="491.0" y="404.0" fill="#a000a0" font-size="14" text-anchor="start">2000</text><rect x="561" y="609" width="33" height="14" fill="#fff"/><text x="562.0" y="621.5" fill="#a000a0" font-size="14" text-anchor="start">2500</text><path d="M671.5 673.5 L671.5 366.9" stroke="#000" stroke-width="1" fill="none" /><path d="M848.5 570.5 L848.5 263.9" stroke="#000" stroke-width="1" fill="none" /><path d="M553.5 605.5 L553.5 298.9" stroke="#000" stroke-width="1" fill="none" /><path d="M730.5 503.5 L730.5 196.9" stroke="#000" stroke-width="1" fill="none" /><path d="M553.5 503.3 L730.5 401.3 L848.5 468.3 L671.5 571.3 L553.5 503.3" stroke="#000" stroke-width="1" fill="none" /><path d="M553.5 401.1 L730.5 299.1 L848.5 366.1 L671.5 469.1 L553.5 401.1" stroke="#000" stroke-width="1" fill="none" /><path d="M553.5 298.9 L730.5 196.9 L848.5 263.9 L671.5 366.9 L553.5 298.9" stroke="#000" stroke-width="1" fill="none" /><path d="M563.7 310.4 L717.4 195.3" stroke="#80ff00" stroke-width="1" fill="none" /><path d="M717.4 195.3 L855.2 250.8" stroke="#00ff80" stroke-width="1" fill="none" /><path d="M563.7 310.4 L701.5 366.9" stroke="#a0ff00" stroke-width="1" fill="none" /><path d="M701.5 366.9 L855.2 250.8" stroke="#e0a000" stroke-width="1" fill="none" /><path d="M717.4 195.3 L717.8 258.0 L718.9 298.1" stroke="#a0e000" stroke-width="1" fill="none" /><path d="M718.9 298.1 L720.0 340.0 L725.3 400.8" stroke="#c0c000" stroke-width="1" fill="none" /><path d="M725.3 400.8 L729.0 443.0 L730.5 503.5" stroke="#e0a020" stroke-width="1" fill="none" /><path d="M855.2 250.8 L854.5 270.0 L852.0 340.0 L850.5 356.5" stroke="#80ff00" stroke-width="1" fill="none" /><path d="M850.5 356.5 L852.0 368.0 L850.0 400.0 L848.7 433.0 L848.4 464.9" stroke="#ff8000" stroke-width="1" fill="none" /><path d="M848.4 464.9 L848.5 570.5" stroke="#ff8000" stroke-width="1" fill="none" /><path d="M563.7 310.4 L562.5 347.5 L562.3 411.5" stroke="#00ff80" stroke-width="1" fill="none" /><path d="M562.3 411.5 L557.6 508.1" stroke="#00e0a0" stroke-width="1" fill="none" /><path d="M701.5 366.9 L700.5 379.0 L700.0 400.0 L695.0 471.0" stroke="#00e0a0" stroke-width="1" fill="none" /><path d="M695.0 471.0 L680.6 573.2" stroke="#00c0c0" stroke-width="1" fill="none" /><path d="M562.3 411.5 L583.0 400.0 L653.0 363.4 L693.5 334.0 L706.5 316.2 L718.9 298.1" stroke="#ff8000" stroke-width="1" fill="none" /><path d="M718.9 298.1 L742.8 303.4 L769.2 311.4 L795.6 321.0 L850.5 356.5" stroke="#00e0a0" stroke-width="1" fill="none" /><path d="M562.3 411.5 L582.2 420.8 L643.8 451.6 L695.0 471.0" stroke="#00ff80" stroke-width="1" fill="none" /><path d="M695.0 471.0 L760.0 418.0 L800.0 390.0 L850.5 356.5" stroke="#00c0c0" stroke-width="1" fill="none" /><path d="M557.6 508.1 L725.3 400.8" stroke="#80ff00" stroke-width="1" fill="none" /><path d="M725.3 400.8 L848.4 464.9" stroke="#00e040" stroke-width="1" fill="none" /><path d="M557.6 508.1 L620.0 537.6 L646.4 551.7 L671.0 567.5 L680.6 573.2" stroke="#00ff80" stroke-width="1" fill="none" /><path d="M680.6 573.2 L848.4 464.9" stroke="#20b0d0" stroke-width="1" fill="none" /><path d="M557.6 508.1 L556.0 550.0" stroke="#0000ff" stroke-width="3.2" fill="none" /><path d="M556.0 550.0 L553.6 578.0 L553.5 605.5" stroke="#0000ff" stroke-width="4" fill="none" /><path d="M680.6 573.2 L673.0 626.0 L671.5 673.5" stroke="#ff0000" stroke-width="3.4" fill="none" /><path d="M553.5 605.5 L541.0 580.5 L547.5 579.5" stroke="#8080ff" stroke-width="1" fill="none" /><path d="M541.0 580.5 L545.5 586.5" stroke="#8080ff" stroke-width="1" fill="none" /><path d="M553.5 596.5 L561.0 590.5 L556.5 590.0" stroke="#8080ff" stroke-width="1" fill="none" /><path d="M561.0 590.5 L559.5 594.5" stroke="#8080ff" stroke-width="1" fill="none" /><path d="M544.5 608.5 L553.5 605.5 L562.5 608.5" stroke="#ff80ff" stroke-width="1" fill="none" /><path d="M547.5 604.5 L553.5 605.5 L560.5 605.5" stroke="#ff80ff" stroke-width="1" fill="none" /><path d="M553.5 605.5 L549.5 593.5" stroke="#ff80ff" stroke-width="1" fill="none" /><path d="M553.5 610.5 L553.5 619.5 L566.5 629.5 L561.5 629.5" stroke="#8080ff" stroke-width="1" fill="none" /><path d="M566.5 629.5 L564.5 624.5" stroke="#8080ff" stroke-width="1" fill="none" /><path d="M553.5 616.5 L546.5 620.5 L550.5 621.5" stroke="#8080ff" stroke-width="1" fill="none" /><path d="M671.5 663.5 L660.5 664.5 L664.5 660.5" stroke="#8080ff" stroke-width="1" fill="none" /><path d="M660.5 664.5 L665.5 667.5" stroke="#8080ff" stroke-width="1" fill="none" /><path d="M663.5 669.5 L671.5 673.5 L680.5 669.5" stroke="#ff80ff" stroke-width="1" fill="none" /><path d="M666.5 674.5 L671.5 673.5 L677.5 674.5" stroke="#ff80ff" stroke-width="1" fill="none" /><path d="M671.5 676.5 L671.5 688.5" stroke="#8080ff" stroke-width="1" fill="none" /><path d="M672.5 679.5 L683.5 682.5 L672.5 688.5" stroke="#8080ff" stroke-width="1" fill="none" /><path d="M848.5 559.5 L840.5 562.5 L845.5 557.5" stroke="#8080ff" stroke-width="1" fill="none" /><path d="M840.5 562.5 L845.5 565.5 L853.5 562.5 L849.5 559.5" stroke="#8080ff" stroke-width="1" fill="none" /><path d="M841.5 567.5 L848.5 570.5 L855.5 567.5" stroke="#ff80ff" stroke-width="1" fill="none" /><path d="M848.5 572.5 L848.5 582.5" stroke="#8080ff" stroke-width="1" fill="none" /><path d="M845.5 575.5 L855.5 576.5 L850.5 582.5 L845.5 575.5" stroke="#8080ff" stroke-width="1" fill="none" /><path d="M723.5 497.5 L730.5 503.5 L737.5 498.5" stroke="#ff80ff" stroke-width="1" fill="none" /><path d="M724.5 504.5 L730.5 503.5 L735.5 505.5" stroke="#ff80ff" stroke-width="1" fill="none" /><path d="M734.5 495.5 L738.5 498.5 L735.5 500.5" stroke="#8080ff" stroke-width="1" fill="none" /><path d="M730.5 505.5 L730.5 515.5 L723.5 519.5 L727.5 520.5" stroke="#8080ff" stroke-width="1" fill="none" /><path d="M726.5 509.5 L732.5 512.5 L726.5 516.5" stroke="#8080ff" stroke-width="1" fill="none" /><path d="M660.5 692.0 L671.5 673.5 L682.5 692.0" stroke="#000" stroke-width="1" fill="none" /><path d="M653.5 693.5 L689.5 693.5" stroke="#000" stroke-width="3" fill="none" stroke-linecap="round" shape-rendering="auto"/><path d="M837.5 589.0 L848.5 570.5 L859.5 589.0" stroke="#000" stroke-width="1" fill="none" /><path d="M830.5 590.5 L866.5 590.5" stroke="#000" stroke-width="3" fill="none" stroke-linecap="round" shape-rendering="auto"/><path d="M542.5 624.0 L553.5 605.5 L564.5 624.0" stroke="#000" stroke-width="1" fill="none" /><path d="M535.5 625.5 L571.5 625.5" stroke="#000" stroke-width="3" fill="none" stroke-linecap="round" shape-rendering="auto"/><path d="M719.5 522.0 L730.5 503.5 L741.5 522.0" stroke="#000" stroke-width="1" fill="none" /><path d="M712.5 523.5 L748.5 523.5" stroke="#000" stroke-width="3" fill="none" stroke-linecap="round" shape-rendering="auto"/><text transform="translate(674.5,664.7) scale(.83,1)" font-size="15.5" fill="#000">1</text><text transform="translate(851.5,561.7) scale(.83,1)" font-size="15.5" fill="#000">2</text><text transform="translate(556.5,596.7) scale(.83,1)" font-size="15.5" fill="#000">3</text><text transform="translate(733.5,494.7) scale(.83,1)" font-size="15.5" fill="#000">4</text><text transform="translate(674.5,562.5) scale(.83,1)" font-size="15.5" fill="#000">5</text><text transform="translate(851.5,459.5) scale(.83,1)" font-size="15.5" fill="#000">6</text><text transform="translate(556.5,494.5) scale(.83,1)" font-size="15.5" fill="#000">7</text><text transform="translate(733.5,392.5) scale(.83,1)" font-size="15.5" fill="#000">8</text><text transform="translate(674.5,460.3) scale(.83,1)" font-size="15.5" fill="#000">9</text><text transform="translate(851.5,357.3) scale(.83,1)" font-size="15.5" fill="#000">10</text><text transform="translate(556.5,392.3) scale(.83,1)" font-size="15.5" fill="#000">11</text><text transform="translate(733.5,290.3) scale(.83,1)" font-size="15.5" fill="#000">12</text><text transform="translate(674.5,358.1) scale(.83,1)" font-size="15.5" fill="#000">13</text><text transform="translate(851.5,255.1) scale(.83,1)" font-size="15.5" fill="#000">14</text><text transform="translate(556.5,290.1) scale(.83,1)" font-size="15.5" fill="#000">15</text><text transform="translate(733.5,188.1) scale(.83,1)" font-size="15.5" fill="#000">16</text><circle cx="553.5" cy="298.9" r="3.6" fill="#ff00ff" shape-rendering="auto"/><circle cx="730.5" cy="196.89999999999998" r="3.6" fill="#ff00ff" shape-rendering="auto"/><circle cx="730.5" cy="298.5" r="12" stroke="#0000ff" fill="none"/><path d="M696.2 298.3 L712.9 288.2 L716.4 289.0 L746.3 308.0 L750.0 307.5 L764.8 298.3" stroke="#0000ff" stroke-width="2.1" fill="none" /><path d="M700.1 291.3 L696.2 298.3 L709.8 297.0" stroke="#0000ff" stroke-width="2.1" fill="none" /><path d="M751.6 300.5 L764.8 298.3 L761.7 305.3" stroke="#0000ff" stroke-width="2.1" fill="none" /><path d="M688.7 439.0 L671.3 449.0 L671.3 489.5 L655.3 497.7" stroke="#0000ff" stroke-width="2.5" fill="none" /><path d="M680.0 438.4 L688.7 439.0 L682.5 446.3" stroke="#0000ff" stroke-width="2.1" fill="none" /><path d="M661.4 489.4 L655.3 497.7 L664.0 497.7" stroke="#0000ff" stroke-width="2.1" fill="none" /><circle cx="671.5" cy="571" r="9" stroke="#ff0000" fill="none"/><path d="M688.6 561.4 L680.7 552.5 L671.3 551.7 L671.3 590.4 L654.3 581.2" stroke="#0000ff" stroke-width="2.5" fill="none" /><path d="M680 552L689.500 562.500L678 561z" fill="#0000ff"/><path d="M663.1 580.5 L654.3 581.2 L662.2 589.5" stroke="#0000ff" stroke-width="2.1" fill="none" /><path d="M848.5 263.9 L853.0 228.0" stroke="#ff0000" stroke-width="1" fill="none" /><path d="M853.0 228.0 L866.0 234.2 L851.5 240.0" stroke="#ff0000" stroke-width="1" fill="none" /><text x="866.7" y="238.8" fill="#ff0000" font-size="14" text-anchor="start">A</text><path d="M848.5 366.1 L853.0 330.0" stroke="#ff0000" stroke-width="1" fill="none" /><path d="M853.0 330.0 L866.0 336.4 L851.5 342.0" stroke="#ff0000" stroke-width="1" fill="none" /><text x="866.7" y="341.0" fill="#ff0000" font-size="14" text-anchor="start">B</text><path d="M930.5 692.0 L930.5 644.0" stroke="#ff0000" stroke-width="1" fill="none" /><path d="M930.5 692.0 L972.5 669.5" stroke="#00ff00" stroke-width="1" fill="none" /><path d="M930.5 692.0 L889.5 669.5" stroke="#0000ff" stroke-width="1" fill="none" /><text x="931.0" y="656.5" fill="#000" font-size="14" text-anchor="start">Z</text><text x="973.0" y="682.0" fill="#000" font-size="14" text-anchor="start">X</text><text x="887.5" y="682.0" fill="#000" font-size="14" text-anchor="start">Y</text></svg>
</body></html>
